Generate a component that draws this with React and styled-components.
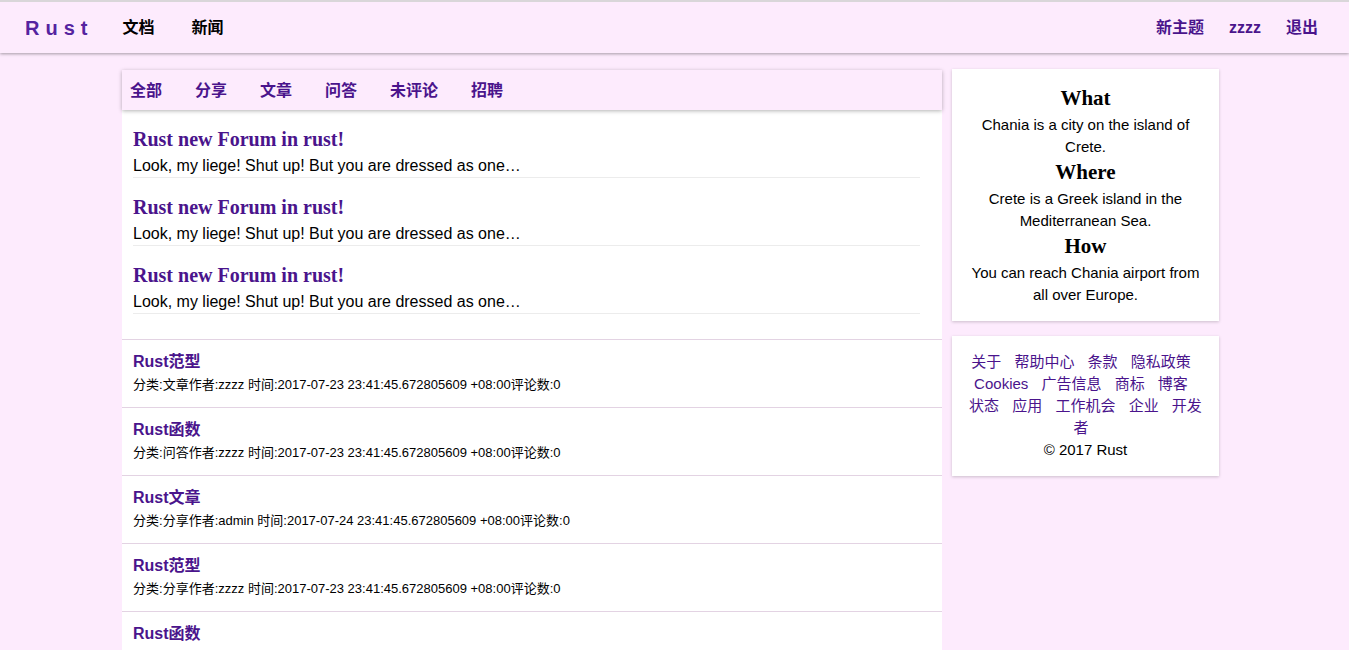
import React from 'react';
import styled, { createGlobalStyle } from 'styled-components';

const PURPLE = '#4a148c';
const PAGE_BG = '#fdebfd';
const SANS = '"Liberation Sans", Arial, "Noto Sans CJK SC", sans-serif';
const SERIF = '"Liberation Serif", "Times New Roman", "Noto Sans CJK SC", serif';

const posts = [
    { title: 'Rust new Forum in rust!', excerpt: 'Look, my liege! Shut up! But you are dressed as one…' },
    { title: 'Rust new Forum in rust!', excerpt: 'Look, my liege! Shut up! But you are dressed as one…' },
    { title: 'Rust new Forum in rust!', excerpt: 'Look, my liege! Shut up! But you are dressed as one…' },
];

const topics = [
    { title: 'Rust范型', category: '文章', author: 'zzzz', time: '2017-07-23 23:41:45.672805609 +08:00', comments: 0 },
    { title: 'Rust函数', category: '问答', author: 'zzzz', time: '2017-07-23 23:41:45.672805609 +08:00', comments: 0 },
    { title: 'Rust文章', category: '分享', author: 'admin', time: '2017-07-24 23:41:45.672805609 +08:00', comments: 0 },
    { title: 'Rust范型', category: '分享', author: 'zzzz', time: '2017-07-23 23:41:45.672805609 +08:00', comments: 0 },
    { title: 'Rust函数', category: '问答', author: 'zzzz', time: '2017-07-23 23:41:45.672805609 +08:00', comments: 0 },
];

const tabs = ['全部', '分享', '文章', '问答', '未评论', '招聘'];

const footerLinks = ['关于', '帮助中心', '条款', '隐私政策', 'Cookies', '广告信息', '商标', '博客', '状态', '应用', '工作机会', '企业', '开发者'];

const about = [
    { head: 'What', text: 'Chania is a city on the island of Crete.' },
    { head: 'Where', text: 'Crete is a Greek island in the Mediterranean Sea.' },
    { head: 'How', text: 'You can reach Chania airport from all over Europe.' },
];

const App = () => {
    return (
        <>
            <GlobalStyle />
            <Header>
                <Logo>Rust</Logo>
                <NavGroup>
                    <NavLink>文档</NavLink>
                    <NavLink>新闻</NavLink>
                </NavGroup>
                <NavGroup right>
                    <NavLink purple>新主题</NavLink>
                    <NavLink purple>zzzz</NavLink>
                    <NavLink purple>退出</NavLink>
                </NavGroup>
            </Header>

            <Layout>
                <MainColumn>
                    <TabBar>
                        {tabs.map((tab) => (
                            <Tab key={tab}>{tab}</Tab>
                        ))}
                    </TabBar>

                    <PostList>
                        {posts.map((post, index) => (
                            <Post key={index}>
                                <PostTitle>{post.title}</PostTitle>
                                <PostExcerpt>{post.excerpt}</PostExcerpt>
                            </Post>
                        ))}
                    </PostList>

                    {topics.map((topic, index) => (
                        <Topic key={index}>
                            <TopicTitle>{topic.title}</TopicTitle>
                            <TopicMeta>
                                分类:{topic.category}作者:{topic.author} 时间:{topic.time}评论数:{topic.comments}
                            </TopicMeta>
                        </Topic>
                    ))}
                </MainColumn>

                <Sidebar>
                    <Card>
                        {about.map((item) => (
                            <React.Fragment key={item.head}>
                                <CardHeading>{item.head}</CardHeading>
                                <CardText>{item.text}</CardText>
                            </React.Fragment>
                        ))}
                    </Card>
                    <FooterCard>
                        <FooterLinks>
                            {footerLinks.map((link, index) => (
                                <React.Fragment key={link}>
                                    <FooterLink>{link}</FooterLink>
                                    {index < footerLinks.length - 1 ? ' ' : ''}
                                </React.Fragment>
                            ))}
                        </FooterLinks>
                        <Copyright>© 2017 Rust</Copyright>
                    </FooterCard>
                </Sidebar>
            </Layout>
        </>
    );
};

// START: Styled Components
const GlobalStyle = createGlobalStyle`
    html, body {
        margin: 0;
        padding: 0;
        background: ${PAGE_BG};
        font-family: ${SANS};
        color: #000;
    }
    * {
        box-sizing: border-box;
    }
`;

const Header = styled.header`
    height: 53px;
    border-top: 2px solid #d9d6d9;
    background: ${PAGE_BG};
    box-shadow: 0 1px 3px rgba(0, 0, 0, 0.35);
    display: flex;
    align-items: center;
    padding: 0 31px 0 25px;
    position: relative;
    z-index: 2;
`;

const Logo = styled.span`
    display: block;
    font-size: 20px;
    line-height: 24px;
    font-weight: bold;
    letter-spacing: 6px;
    color: #5523a0;
    margin-right: 29px;
`;

const NavGroup = styled.nav`
    display: flex;
    align-items: center;
    gap: ${props => props.right ? '25px' : '37px'};
    margin-left: ${props => props.right ? 'auto' : '0'};
`;

const NavLink = styled.a`
    display: block;
    font-size: 16px;
    line-height: 20px;
    font-weight: bold;
    color: ${props => props.purple ? PURPLE : '#000'};
    cursor: pointer;
`;

const Layout = styled.div`
    display: flex;
    align-items: flex-start;
    gap: 10px;
    padding: 16px 0 0 122px;
`;

const MainColumn = styled.main`
    width: 820px;
    display: flex;
    flex-direction: column;
`;

const TabBar = styled.div`
    height: 40px;
    margin-top: 1px;
    padding: 2px 0 0 8px;
    background: ${PAGE_BG};
    box-shadow: 0 1px 4px rgba(0, 0, 0, 0.3);
    display: flex;
    align-items: center;
    gap: 33px;
    position: relative;
    z-index: 1;
`;

const Tab = styled.a`
    display: block;
    font-size: 16px;
    line-height: 20px;
    font-weight: bold;
    color: ${PURPLE};
    cursor: pointer;
`;

const PostList = styled.div`
    background: #fff;
    padding: 0 22px 25px 11px;
`;

const Post = styled.div`
    padding: 18px 0 1px;
    border-bottom: 1px solid #ececec;
`;

const PostTitle = styled.h2`
    margin: 0;
    font-family: ${SERIF};
    font-size: 20px;
    line-height: 23px;
    font-weight: bold;
    color: ${PURPLE};
`;

const PostExcerpt = styled.p`
    margin: 5px 0 0;
    font-size: 16px;
    line-height: 20px;
`;

const Topic = styled.div`
    background: #fff;
    border-top: 1px solid #e3d3e3;
    padding: 12px 11px 14px;
`;

const TopicTitle = styled.h3`
    margin: 0;
    font-size: 16px;
    line-height: 20px;
    font-weight: bold;
    color: ${PURPLE};
`;

const TopicMeta = styled.div`
    margin-top: 4px;
    font-size: 13px;
    line-height: 17px;
`;

const Sidebar = styled.aside`
    width: 267px;
    display: flex;
    flex-direction: column;
    gap: 15px;
`;

const Card = styled.section`
    background: #fff;
    box-shadow: 0 1px 3px rgba(0, 0, 0, 0.2);
    padding: 15px 18px 15px;
    text-align: center;
`;

const CardHeading = styled.h3`
    margin: 0;
    font-family: ${SERIF};
    font-size: 21px;
    line-height: 28px;
    font-weight: bold;
`;

const CardText = styled.p`
    margin: 2px 0 0;
    font-size: 15px;
    line-height: 22px;
`;

const FooterCard = styled(Card)`
    padding: 15px 16px 15px;
`;

const FooterLinks = styled.div`
    font-size: 15px;
    line-height: 22px;
`;

const FooterLink = styled.a`
    color: ${PURPLE};
    margin-right: 9px;
    cursor: pointer;
`;

const Copyright = styled.div`
    font-size: 15px;
    line-height: 22px;
`;
// END: Styled Components

export default App;
